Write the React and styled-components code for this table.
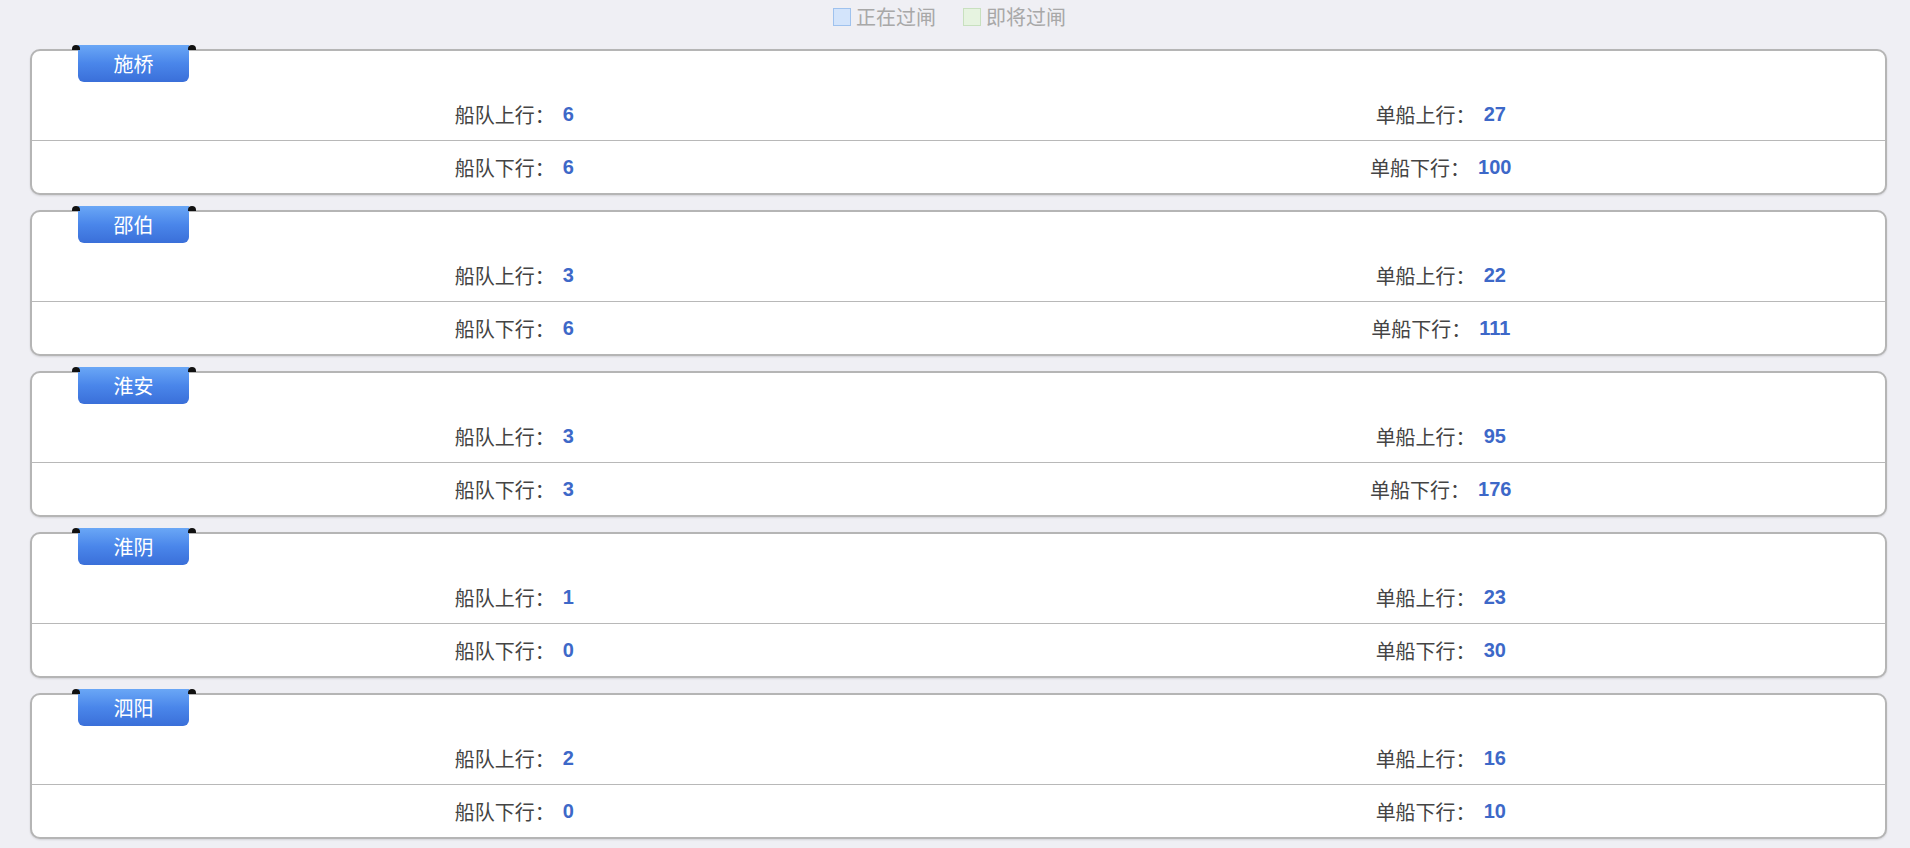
import styled, { createGlobalStyle } from 'styled-components';

const GlobalStyle = createGlobalStyle`
  html, body {
    margin: 0;
    padding: 0;
    background: #efeff4;
    font-family: "Noto Sans CJK SC", "Liberation Sans", sans-serif;
  }
`;

const stations = [
  { name: '施桥', fleetUp: 6, fleetDown: 6, singleUp: 27, singleDown: 100 },
  { name: '邵伯', fleetUp: 3, fleetDown: 6, singleUp: 22, singleDown: 111 },
  { name: '淮安', fleetUp: 3, fleetDown: 3, singleUp: 95, singleDown: 176 },
  { name: '淮阴', fleetUp: 1, fleetDown: 0, singleUp: 23, singleDown: 30 },
  { name: '泗阳', fleetUp: 2, fleetDown: 0, singleUp: 16, singleDown: 10 },
];

const App = () => {
  return (
    <Page>
      <GlobalStyle />
      <Legend>
        <LegendItem>
          <Swatch $fill="#d3e4fb" $border="#9fc2ee" />
          正在过闸
        </LegendItem>
        <LegendItem>
          <Swatch $fill="#e6f3e0" $border="#c8e0bf" />
          即将过闸
        </LegendItem>
      </Legend>
      <CardList>
        {stations.map((s) => (
          <Card key={s.name}>
            <CardHeader>
              <Tab>{s.name}</Tab>
            </CardHeader>
            <Row>
              <Cell>
                船队上行：<Count>{s.fleetUp}</Count>
              </Cell>
              <Cell>
                单船上行：<Count>{s.singleUp}</Count>
              </Cell>
            </Row>
            <Row $last>
              <Cell>
                船队下行：<Count>{s.fleetDown}</Count>
              </Cell>
              <Cell>
                单船下行：<Count>{s.singleDown}</Count>
              </Cell>
            </Row>
          </Card>
        ))}
      </CardList>
    </Page>
  );
};

const Page = styled.div`
  width: 1910px;
  height: 848px;
  overflow: hidden;
  box-sizing: border-box;
  padding: 0 23px 0 30px;
`;

const Legend = styled.div`
  height: 34px;
  display: flex;
  justify-content: center;
  align-items: center;
  gap: 27px;
  padding-right: 18px;
`;

const LegendItem = styled.div`
  display: flex;
  align-items: center;
  gap: 5px;
  font-size: 20px;
  color: #a8a8a8;
  line-height: 1;
`;

const Swatch = styled.span`
  display: inline-block;
  width: 16px;
  height: 16px;
  background: ${(p) => p.$fill};
  border: 1px solid ${(p) => p.$border};
`;

const CardList = styled.div`
  display: flex;
  flex-direction: column;
  gap: 15px;
  margin-top: 15px;
`;

const Card = styled.div`
  background: #fff;
  border: 2px solid #b5b5b5;
  border-radius: 10px;
  box-shadow: 0 1px 2px rgba(0, 0, 0, 0.12);
`;

const CardHeader = styled.div`
  height: 37px;
  display: flex;
  align-items: flex-start;
  padding-left: 46px;
`;

const Tab = styled.div`
  position: relative;
  margin-top: -6px;
  width: 111px;
  height: 37px;
  display: flex;
  align-items: center;
  justify-content: center;
  color: #fff;
  font-size: 20px;
  background: linear-gradient(to bottom, #6aa7f6 0%, #4a86ea 50%, #3a6fd9 100%);
  border-radius: 0 0 6px 6px;

  &::before,
  &::after {
    content: '';
    position: absolute;
    top: 0;
    width: 8px;
    height: 5px;
    background: #111;
    border-radius: 5px 5px 0 0;
  }
  &::before {
    left: -6px;
  }
  &::after {
    right: -7px;
  }
`;

const Row = styled.div`
  display: grid;
  grid-template-columns: 1fr 1fr;
  height: 52px;
  border-bottom: ${(p) => (p.$last ? 'none' : '1px solid #b8b8b8')};
`;

const Cell = styled.div`
  display: flex;
  align-items: center;
  justify-content: center;
  padding-left: 38px;
  font-size: 20px;
  color: #444;
`;

const Count = styled.span`
  margin-left: 8px;
  font-family: "Liberation Sans", Arial, sans-serif;
  font-weight: 700;
  color: #3d68c8;
`;

export default App;
